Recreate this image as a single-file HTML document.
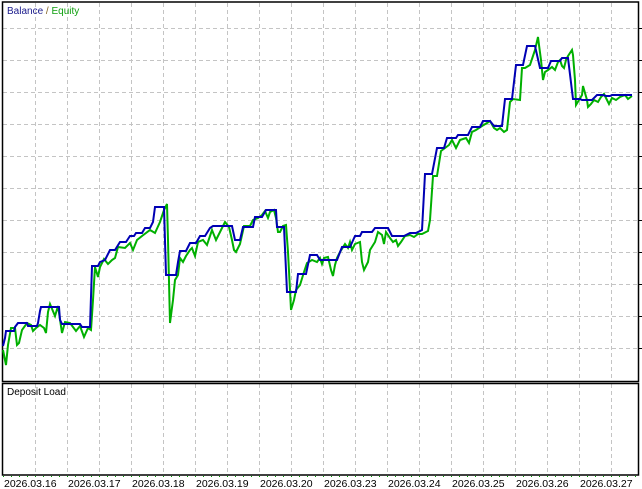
<!DOCTYPE html>
<html><head><meta charset="utf-8"><style>
html,body{margin:0;padding:0;background:#fff;width:642px;height:489px;overflow:hidden}
svg{display:block}
text{font-family:"Liberation Sans",sans-serif}
</style></head><body>
<svg width="642" height="489" viewBox="0 0 642 489" xmlns="http://www.w3.org/2000/svg">
<rect width="642" height="489" fill="#fff"/>
<g stroke="#c4c4c4" stroke-width="1" stroke-dasharray="4,3" fill="none">
<path d="M35.5 3V381M67.5 3V381M99.5 3V381M131.5 3V381M163.5 3V381M195.5 3V381M227.5 3V381M259.5 3V381M291.5 3V381M323.5 3V381M355.5 3V381M387.5 3V381M419.5 3V381M451.5 3V381M483.5 3V381M515.5 3V381M547.5 3V381M579.5 3V381M611.5 3V381"/>
<path d="M35.5 384V475M67.5 384V475M99.5 384V475M131.5 384V475M163.5 384V475M195.5 384V475M227.5 384V475M259.5 384V475M291.5 384V475M323.5 384V475M355.5 384V475M387.5 384V475M419.5 384V475M451.5 384V475M483.5 384V475M515.5 384V475M547.5 384V475M579.5 384V475M611.5 384V475"/>
<path d="M3 28.5H638M3 60.5H638M3 92.5H638M3 124.5H638M3 156.5H638M3 188.5H638M3 220.5H638M3 252.5H638M3 284.5H638M3 316.5H638M3 348.5H638"/>
</g>
<g stroke="#000" fill="none">
<rect x="2.5" y="2" width="636" height="379.5" stroke-width="1.5"/>
<rect x="2.5" y="383.5" width="636" height="91.5" stroke-width="1.5"/>
<path d="M639 28.5h3M639 60.5h3M639 92.5h3M639 124.5h3M639 156.5h3M639 188.5h3M639 220.5h3M639 252.5h3M639 284.5h3M639 316.5h3M639 348.5h3"/>
</g>
<path d="M3 476.5H638" stroke="#00a000" stroke-width="1" stroke-dasharray="1,7"/>
<polyline fill="none" stroke="#00b000" stroke-width="2" stroke-linejoin="miter" points="3,350 6,365 8,345 11,328 15,328 17,345 19,343 22,330 27,323 31,325 33,331 36,328 40,325 44,328 46,333 48,312 50,304 55,316 58,306 62,333 65,322 70,323 73,327 76,331 80,326 84,337 88,328 91,330 93,300 95,267 98,277 100,267 104,259 108,264 112,260 115,258 118,247 125,248 130,243 133,250 137,240 142,236 150,230 155,233 160,222 164,210 167,204 168,240 170,323 173,300 175,280 178,275 180,258 183,262 186,256 190,250 192,248 195,256 198,242 203,240 207,245 212,230 216,240 218,236 222,228 225,222 229,227 232,240 234,250 236,252 240,244 244,226 250,226 253,220 258,218 262,215 265,211 268,218 270,212 274,210 276,218 278,232 280,232 283,226 286,225 288,252 290,290 291,310 294,300 296,290 300,285 304,272 307,263 312,260 317,262 320,258 322,264 324,258 328,257 331,270 333,276 335,265 337,258 340,252 345,244 348,248 350,242 352,250 355,244 360,242 362,262 364,270 368,262 370,250 375,242 378,232 382,235 384,244 386,232 390,238 393,242 396,240 398,246 401,242 405,236 410,235 414,237 418,234 422,234 428,231 430,220 433,176 437,176 441,151 445,148 449,145 452,140 456,148 460,140 466,138 469,143 472,132 476,130 482,126 487,123 490,121 494,128 497,130 500,128 504,132 507,130 510,102 513,99 520,100 522,68 525,68 530,65 535,50 538,37 539,45 541,60 543,80 545,72 548,70 552,67 555,70 558,62 560,60 562,66 564,68 566,60 568,56 572,50 573,55 575,80 576,105 579,100 582,95 583,86 587,100 588,107 591,104 594,100 598,102 601,97 604,94 607,100 609,104 612,98 616,100 620,97 625,95 628,99 632,96"/>
<polyline fill="none" stroke="#0000b4" stroke-width="2" points="3,346 5,338 6,331 14,331 15,327 18,323 27,323 28,326 37,326 38,323 40,311 41,307 59,307 60,320 62,324 80,324 82,327 90,327 92,266 98,266 100,262 105,260 110,250 115,250 120,242 126,242 130,236 134,236 136,233 142,233 145,228 150,228 153,222 155,207 164,207 166,275 176,275 178,262 180,251 186,251 190,243 196,243 200,236 205,236 210,228 213,226 232,226 235,240 240,240 243,227 253,227 255,217 262,217 266,210 276,210 277,227 284,227 287,292 296,292 298,274 306,274 310,255 317,255 320,260 337,260 342,247 350,247 355,236 360,236 362,232 372,232 375,228 388,228 392,236 404,236 408,234 410,233 416,233 422,230 425,174 432,174 437,148 444,148 447,138 456,138 458,135 468,135 472,127 480,127 483,121 490,121 494,126 502,126 505,99 512,99 516,65 523,65 527,46 535,46 540,68 548,68 551,61 560,61 562,58 568,58 573,99 580,99 582,100 592,100 597,95 603,95 606,96 610,96 612,95 632,95"/>
<text x="7" y="14" font-size="10"><tspan fill="#1a1a8c">Balance</tspan><tspan fill="#806020"> / </tspan><tspan fill="#10a010">Equity</tspan></text>
<text x="7" y="395" font-size="10" fill="#000">Deposit Load</text>
<g font-size="10.5" fill="#000">
<text x="4" y="487">2026.03.16</text>
<text x="68" y="487">2026.03.17</text>
<text x="132" y="487">2026.03.18</text>
<text x="196" y="487">2026.03.19</text>
<text x="260" y="487">2026.03.20</text>
<text x="324" y="487">2026.03.23</text>
<text x="388" y="487">2026.03.24</text>
<text x="452" y="487">2026.03.25</text>
<text x="516" y="487">2026.03.26</text>
<text x="580" y="487">2026.03.27</text>
</g>
</svg>
</body></html>
